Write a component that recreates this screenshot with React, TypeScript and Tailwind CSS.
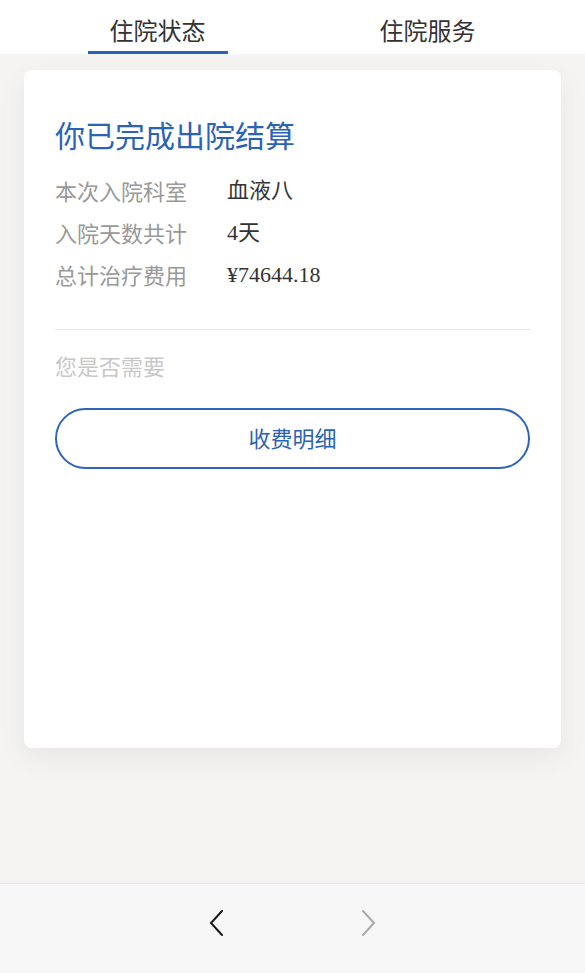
import React from "react";

const Chevron = ({ dir, color }: { dir: "left" | "right"; color: string }) => (
  <svg width="14" height="26" viewBox="0 0 14 26" fill="none">
    <path
      d={dir === "left" ? "M13 1 L2 13 L13 25" : "M1 1 L12 13 L1 25"}
      stroke={color}
      strokeWidth="2"
      strokeLinecap="round"
      strokeLinejoin="miter"
    />
  </svg>
);

const App = () => {
  const rows = [
    { label: "本次入院科室", value: "血液八" },
    { label: "入院天数共计", value: "4天" },
    { label: "总计治疗费用", value: "¥74644.18" },
  ];

  return (
    <div className="min-h-screen flex flex-col bg-[#f5f4f2] font-['Noto_Sans_CJK_SC',sans-serif]">
      <header className="h-[54px] bg-white flex justify-center">
        <div className="w-[270px] flex flex-col items-center">
          <span className="text-[24px] leading-[34px] mt-[13px] text-[#333]">住院状态</span>
          <span className="mt-auto w-[140px] h-[3px] bg-[#2a62b8]" />
        </div>
        <div className="w-[270px] flex flex-col items-center">
          <span className="text-[24px] leading-[34px] mt-[13px] text-[#333]">住院服务</span>
        </div>
      </header>

      <main className="flex-1 px-[24px] pt-[16px]">
        <div className="h-[678px] bg-white rounded-[8px] shadow-[0_10px_30px_rgba(0,0,0,0.06)] px-[31px] pt-[43px]">
          <h1 className="text-[30px] leading-[42px] text-[#2a62b8]">你已完成出院结算</h1>
          <div className="mt-[15px]">
            {rows.map((row, index) => (
              <div key={index} className="flex h-[42px] items-center text-[22px] pb-[1px]">
                <span className="w-[172px] text-[#999]">{row.label}</span>
                <span className="text-[#333] font-['Liberation_Serif','Noto_Sans_CJK_SC',serif]">{row.value}</span>
              </div>
            ))}
          </div>
          <div className="mt-[33px] h-px bg-[#e6e6e6]" />
          <p className="mt-[20px] text-[22px] leading-[30px] text-[#c8c8c8]">您是否需要</p>
          <button className="mt-[28px] w-full h-[61px] pb-[3px] rounded-full border-2 border-[#2e65b9] text-[22px] text-[#2a62b8] bg-white">
            收费明细
          </button>
        </div>
      </main>

      <footer className="h-[90px] border-t border-[#e9e7e7] bg-[#f7f7f7] flex items-center justify-center gap-[139px] pb-[12px]">
        <Chevron dir="left" color="#1a1a1a" />
        <Chevron dir="right" color="#aaaaaa" />
      </footer>
    </div>
  );
};

export default App;
